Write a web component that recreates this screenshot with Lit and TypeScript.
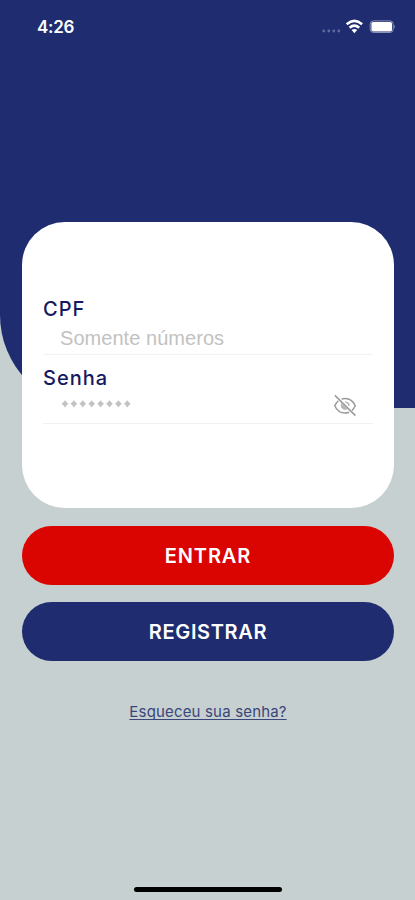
import { LitElement, html, svg, css } from "lit";
import { customElement } from "lit/decorators.js";

@customElement("status-bar")
class StatusBar extends LitElement {
  static styles = css`
    :host { display: flex; justify-content: space-between; box-sizing: border-box; height: 54px; padding: 17px 20px 0 37px; color: #fff; }
    .time { font: 600 17px/20px Inter, sans-serif; letter-spacing: -0.3px; }
    .icons { display: block; width: 74px; height: 20px; }
  `;
  render() {
    return html`
      <span class="time">4:26</span>
      <svg class="icons" viewBox="0 0 74 20">
        <g fill="#5f6a9e">
          <circle cx="2.8" cy="14" r="1.4"></circle><circle cx="7.8" cy="14" r="1.4"></circle>
          <circle cx="12.8" cy="14" r="1.4"></circle><circle cx="17.8" cy="14" r="1.4"></circle>
        </g>
        <g fill="none" stroke="#fff" stroke-width="2.6">
          <path d="M25.7 7.2Q33.4 0.6 41.1 7.2"></path>
          <path d="M28.6 10.8Q33.4 6.6 38.2 10.8"></path>
        </g>
        <path d="M30.6 13.1Q33.4 11 36.2 13.1L33.4 16.3Z" fill="#fff"></path>
        <rect x="49.2" y="3.9" width="23" height="11.6" rx="3.2" fill="none" stroke="#8b93b8"></rect>
        <rect x="50.4" y="5" width="20.6" height="9.4" rx="1.6" fill="#fff"></rect>
        <path d="M73.1 7.8Q74.8 9.8 73.1 11.8Z" fill="#8b93b8"></path>
      </svg>`;
  }
}

@customElement("login-card")
class LoginCard extends LitElement {
  static styles = css`
    :host { display: block; box-sizing: border-box; height: 286px; padding: 75px 21px 0; border-radius: 43px; background: #fff; }
    .field { border-bottom: 1.5px solid #f1f2f3; box-sizing: border-box; }
    .cpf { height: 58px; }
    .senha { height: 69px; padding-top: 11px; }
    .label { font: 500 20px/25px Inter, sans-serif; color: #17195f; }
    .cpf .label { letter-spacing: 1px; }
    .senha .label { letter-spacing: 1px; }
    .row { display: flex; justify-content: space-between; padding: 0 16px 0 17px; }
    .hint { font: 400 20px/24px "Liberation Sans", sans-serif; color: #c2c2c2; letter-spacing: 0.05px; }
    .cpf .row { padding-top: 4px; }
    .dots { display: block; width: 74px; height: 10px; margin-top: 8px; }
    .eye { display: block; width: 24px; height: 24px; margin-top: 3px; }
  `;
  render() {
    return html`
      <div class="field cpf">
        <div class="label">CPF</div>
        <div class="row"><span class="hint">Somente números</span></div>
      </div>
      <div class="field senha">
        <div class="label">Senha</div>
        <div class="row">
          <svg class="dots" viewBox="0 0 74 10" fill="#c2c2c2">
            ${[0, 1, 2, 3, 4, 5, 6, 7].map((i) => {
              const x = 5 + i * 8.9;
              return svg`<path d="M${x} 1.2L${x + 1.7} 3.3L${x + 3.4} 4.8L${x + 1.7} 6.3L${x} 8.4L${x - 1.7} 6.3L${x - 3.4} 4.8L${x - 1.7} 3.3Z"></path>`;
            })}
          </svg>
          <svg class="eye" viewBox="0 0 24 24" fill="none" stroke="#9b9b9b" stroke-width="1.5">
            <path d="M1.9 1.4L22.4 21.6"></path>
            <path d="M8.6 5Q12 3.8 15.5 5Q20.2 7 22.2 11.8Q21 14.5 19 16.5"></path>
            <path d="M5.4 6.8Q3 8.9 1.8 11.8Q4.8 19.1 12.2 19.1Q14.2 19.1 16.1 18.3"></path>
            <path d="M12.2 8Q15.9 8.3 16 11.8" stroke-width="1.2"></path>
            <path d="M8.7 9.3Q7.5 11.5 8.7 13.8Q10.8 16.4 14.1 15.1Z" fill="#b5b5b5" stroke="#b5b5b5" stroke-width="0.8"></path>
          </svg>
        </div>
      </div>`;
  }
}

@customElement("app-root")
class AppRoot extends LitElement {
  static styles = css`
    :host { display: block; position: relative; width: 415px; height: 900px; overflow: hidden; background: #c7d0d1; }
    .backdrop { position: absolute; inset: 0 0 auto 0; height: 408px; background: #1f2d70; border-bottom-left-radius: 93px; }
    .screen { position: relative; display: flex; flex-direction: column; height: 100%; }
    .content { display: flex; flex-direction: column; padding: 168px 21px 0 22px; }
    .button { box-sizing: border-box; height: 59px; border: 0; border-radius: 30px; padding: 1px 0 0; color: #fff; font: 600 20px/59px Inter, sans-serif; text-align: center; }
    .enter { margin-top: 17.5px; background: #da0400; letter-spacing: 0.9px; }
    .register { margin-top: 17.5px; background: #1f2d70; letter-spacing: 0.65px; }
    .forgot { align-self: center; margin-top: 41px; font: 400 15px/20px Inter, sans-serif; letter-spacing: 0.17px; color: #3a4679; text-decoration: underline; text-underline-offset: 2px; text-decoration-thickness: 1px; text-decoration-skip-ink: none; }
    .home { align-self: center; width: 148px; height: 5px; margin: auto 0 8px; border-radius: 3px; background: #000; }
  `;
  render() {
    return html`
      <div class="backdrop"></div>
      <div class="screen">
        <status-bar></status-bar>
        <div class="content">
          <login-card></login-card>
          <button class="button enter">ENTRAR</button>
          <button class="button register">REGISTRAR</button>
          <a class="forgot">Esqueceu sua senha?</a>
        </div>
        <div class="home"></div>
      </div>`;
  }
}
